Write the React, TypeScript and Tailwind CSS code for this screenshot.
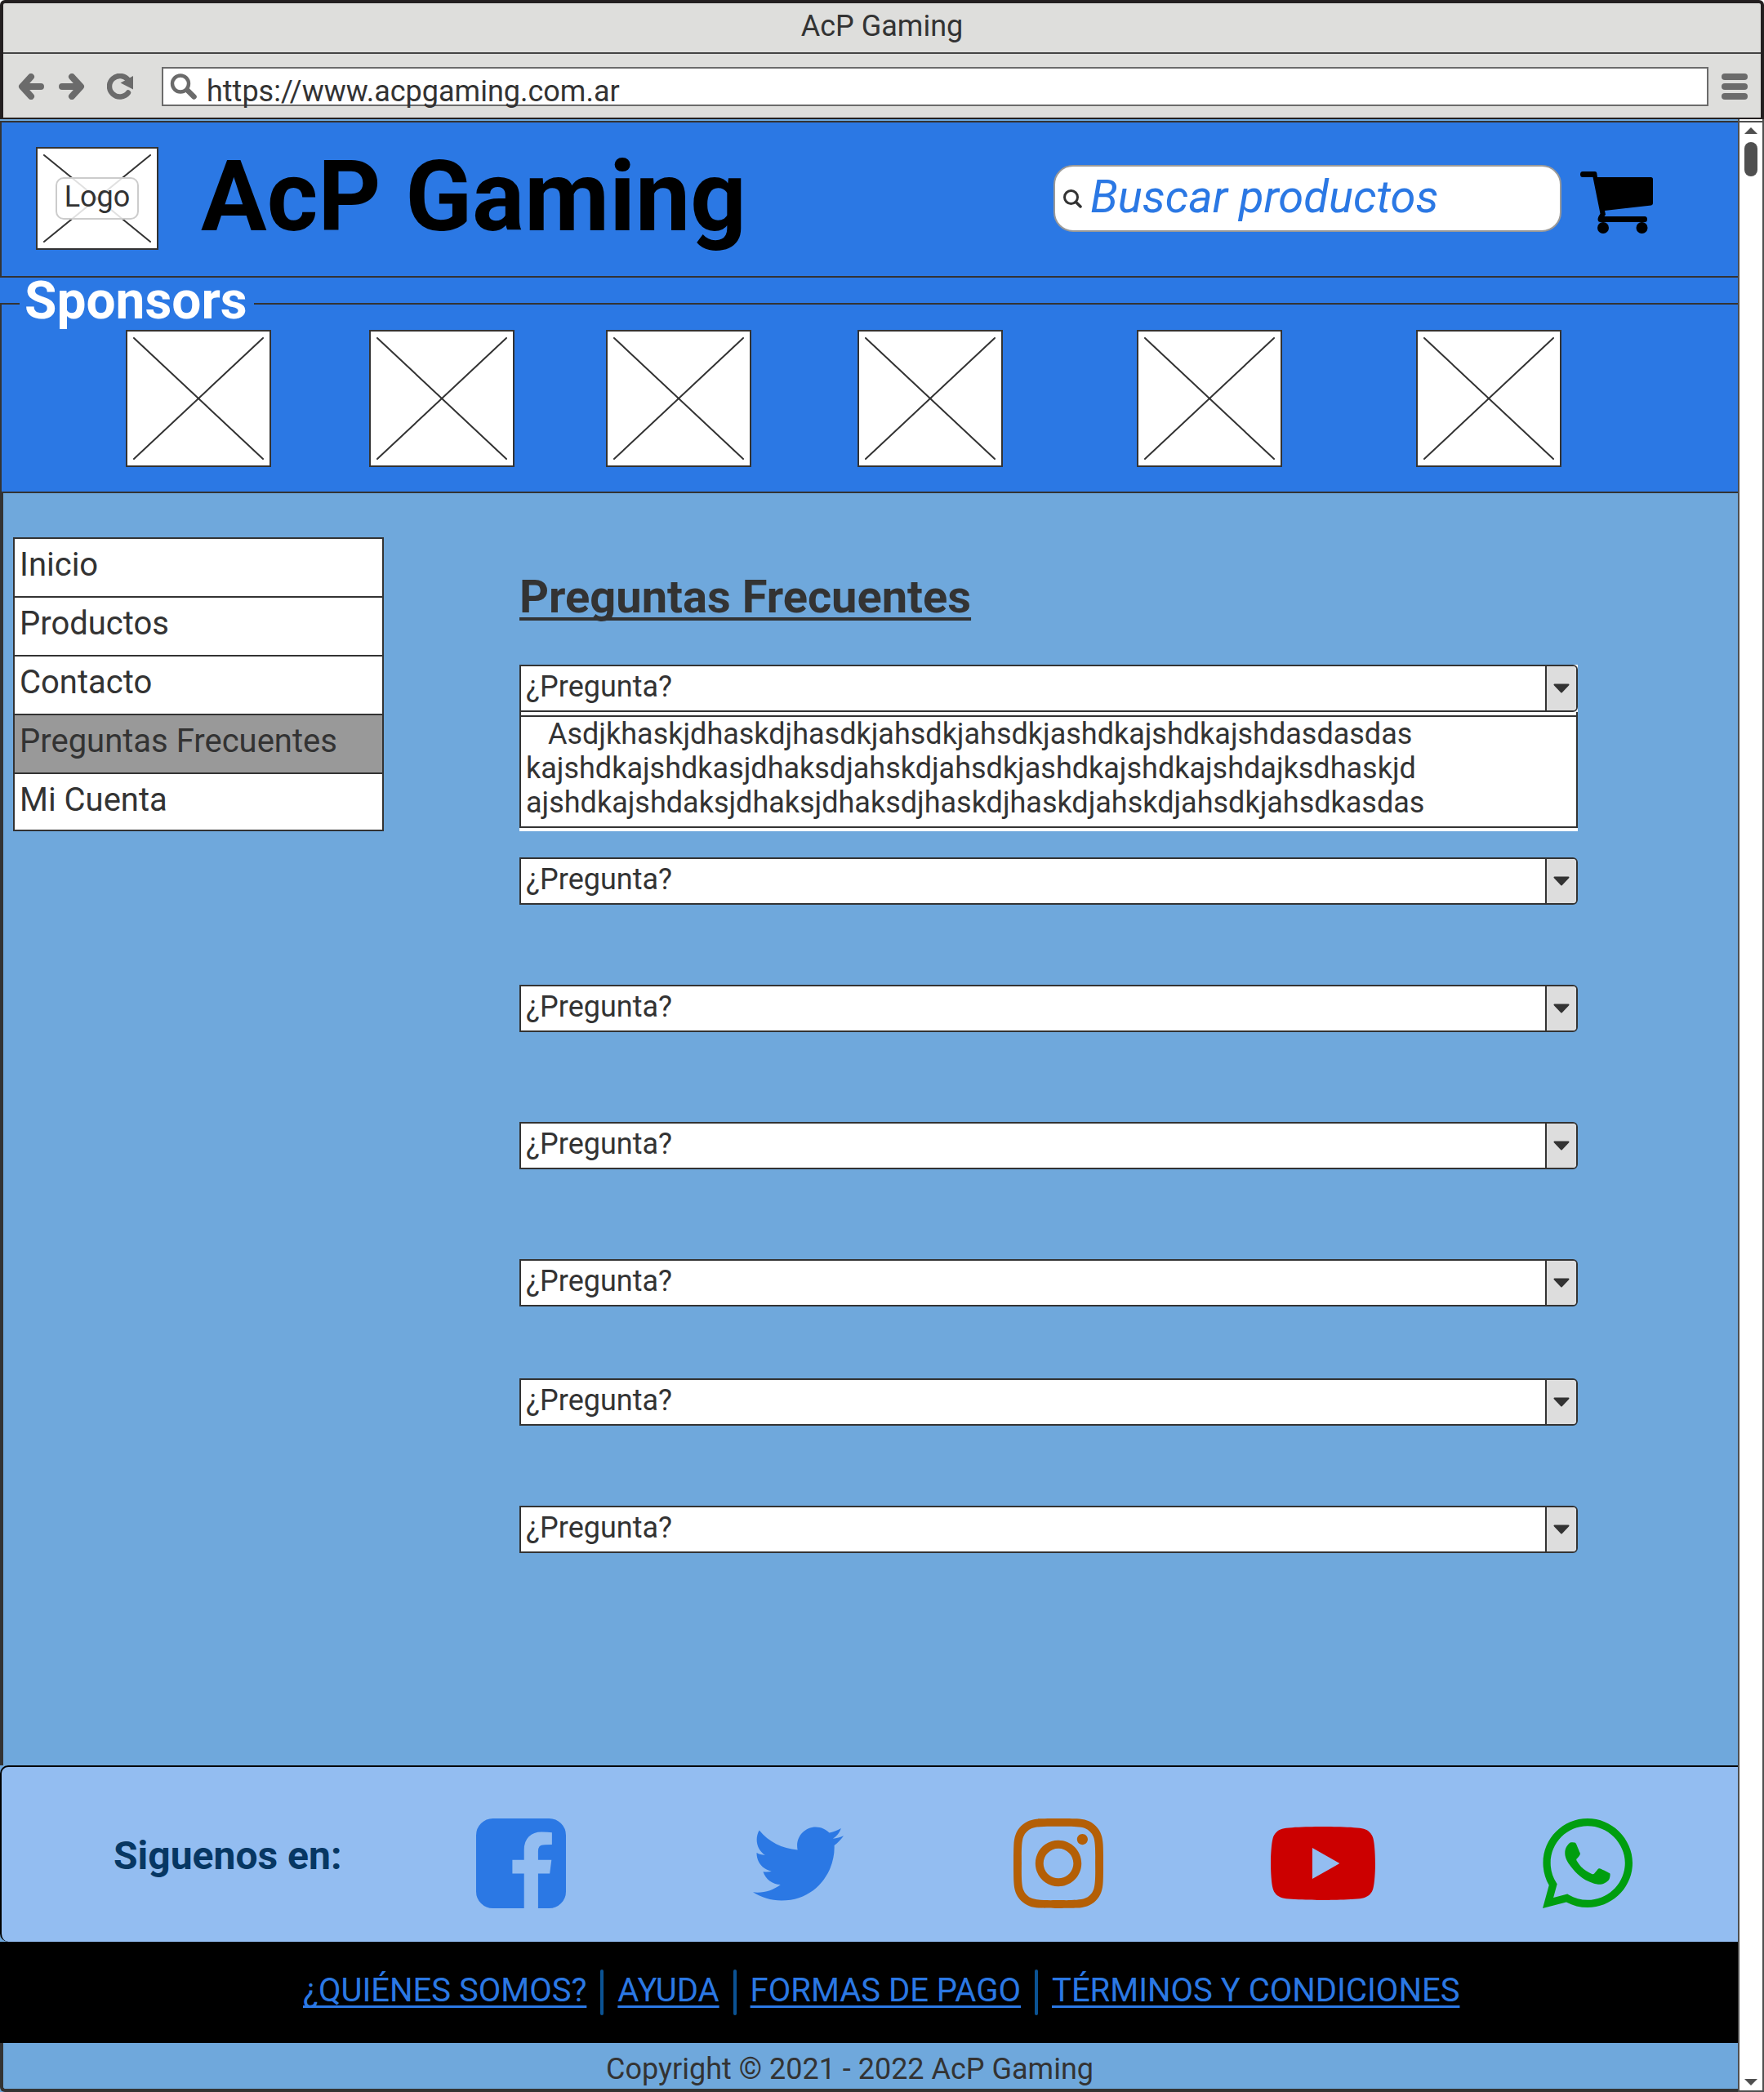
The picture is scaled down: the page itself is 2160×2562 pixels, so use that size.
import { FaInstagram, FaTwitter, FaWhatsapp, FaYoutube } from "react-icons/fa";

const sponsors = [
  { name: "Sponsor 1", gap: "ml-[130px]" },
  { name: "Sponsor 2", gap: "ml-[120px]" },
  { name: "Sponsor 3", gap: "ml-[112px]" },
  { name: "Sponsor 4", gap: "ml-[130px]" },
  { name: "Sponsor 5", gap: "ml-[164px]" },
  { name: "Sponsor 6", gap: "ml-[164px]" },
];

const menu = ["Inicio", "Productos", "Contacto", "Preguntas Frecuentes", "Mi Cuenta"];
const currentPage = "Preguntas Frecuentes";

const answer = [
  "Asdjkhaskjdhaskdjhasdkjahsdkjahsdkjashdkajshdkajshdasdasdas",
  "kajshdkajshdkasjdhaksdjahskdjahsdkjashdkajshdkajshdajksdhaskjd",
  "ajshdkajshdaksjdhaksjdhaksdjhaskdjhaskdjahskdjahsdkjahsdkasdas",
];

const closedQuestions = ["mt-8", "mt-[98px]", "mt-[110px]", "mt-[110px]", "mt-[88px]", "mt-[98px]"];

const footerLinks = ["¿QUIÉNES SOMOS?", "AYUDA", "FORMAS DE PAGO", "TÉRMINOS Y CONDICIONES"];

function Crossed() {
  return (
    <svg className="block h-full w-full overflow-visible" stroke="#333333" strokeWidth="2" strokeLinecap="round" aria-hidden="true">
      <line x1="0" y1="0" x2="100%" y2="100%" />
      <line x1="100%" y1="0" x2="0" y2="100%" />
    </svg>
  );
}

function BrowserBar() {
  return (
    <div className="rounded-t-[6px] border-x-4 border-t-4 border-b-2 border-[#231f20] bg-[#dededc]">
      <div className="h-[62px] border-b-2 border-[#444444] text-center text-4xl leading-[56px]">AcP Gaming</div>
      <div className="flex h-[78px] items-center pt-0.5 pr-4 pl-[18px]">
        <button type="button" aria-label="Atrás">
          <svg className="block h-8 w-8" viewBox="0 0 32 32" fill="none" stroke="#6b6b6b" strokeWidth="8" strokeLinecap="round" strokeLinejoin="round">
            <path d="M16 4 5 16l11 12M6 16h22" />
          </svg>
        </button>
        <button type="button" aria-label="Adelante" className="ml-[18px]">
          <svg className="block h-8 w-8" viewBox="0 0 32 32" fill="none" stroke="#6b6b6b" strokeWidth="8" strokeLinecap="round" strokeLinejoin="round">
            <path d="m16 4 11 12-11 12M26 16H4" />
          </svg>
        </button>
        <button type="button" aria-label="Recargar" className="ml-[27px]">
          <svg className="block h-8 w-8" viewBox="0 0 32 32">
            <path d="M26 23.500A12.800 12.800 0 1 1 26 8" fill="none" stroke="#6b6b6b" strokeWidth="6.400" strokeLinecap="round" />
            <path d="M32 3v16.500L16.500 11.500Z" fill="#6b6b6b" />
          </svg>
        </button>
        <div className="ml-[35px] flex h-12 min-w-0 flex-1 items-start border-2 border-[#6b6b6b] bg-white pl-2">
          <svg className="mt-1.5 block h-8 w-[33px] shrink-0" viewBox="0 0 33 32" fill="none" stroke="#6b6b6b" strokeLinecap="round" aria-hidden="true">
            <circle cx="13" cy="12.500" r="10" strokeWidth="4.400" />
            <path d="m22 21 7.500 7.500" strokeWidth="6.500" />
          </svg>
          <input
            type="text"
            aria-label="Dirección"
            defaultValue="https://www.acpgaming.com.ar"
            className="ml-3 h-14 min-w-0 flex-1 bg-transparent text-4xl outline-none"
          />
        </div>
        <button type="button" aria-label="Menú" className="ml-4 flex w-8 flex-col gap-1">
          <span className="h-2 rounded-full bg-[#6b6b6b]" />
          <span className="h-2 rounded-full bg-[#6b6b6b]" />
          <span className="h-2 rounded-full bg-[#6b6b6b]" />
        </button>
      </div>
    </div>
  );
}

function ScrollBar() {
  return (
    <div className="flex w-8 shrink-0 flex-col border-x-2 border-b-2 border-[#4f4f4f] bg-white" aria-hidden="true">
      <div className="h-1 border-b-2 border-[#4f4f4f]" />
      <svg className="mt-1.5 h-2 w-4 self-center" viewBox="0 0 16 8" fill="#4f4f4f">
        <path d="M8 0l8 8H0z" />
      </svg>
      <div className="mt-2.5 h-[42px] w-4 self-center rounded-full bg-[#4f4f4f]" />
      <svg className="mt-auto mb-1.5 h-2 w-4 self-center" viewBox="0 0 16 8" fill="#4f4f4f">
        <path d="M0 0h16L8 8z" />
      </svg>
    </div>
  );
}

function SiteHeader() {
  return (
    <header className="mt-0.5 flex h-48 items-center border-y-2 border-l-2 border-[#333333] bg-[#2b78e4] pr-[104px] pb-0.5 pl-[42px]">
      <a href="#" className="grid h-[126px] w-[150px] shrink-0 grid-cols-1 grid-rows-1 place-items-center border-2 border-[#333333] bg-white p-2">
        <span className="col-start-1 row-start-1 h-[106px] w-[130px]">
          <Crossed />
        </span>
        <span className="z-10 col-start-1 row-start-1 h-[52px] w-[102px] rounded-[10px] border-2 border-[#cccccc] bg-white/85 text-center text-4xl leading-[44px]">
          Logo
        </span>
      </a>
      <h1 className="ml-[52px] pb-1 text-[120px] leading-none font-bold whitespace-nowrap text-black">AcP Gaming</h1>
      <label className="ml-auto flex h-[82px] w-[622px] items-center rounded-3xl border-2 border-[#999999] bg-white pr-6 pl-2.5">
        <svg className="block h-[23px] w-[23px] shrink-0" viewBox="0 0 23 23" fill="none" stroke="#333333" strokeLinecap="round" aria-hidden="true">
          <circle cx="9.500" cy="9.500" r="8" strokeWidth="3" />
          <path d="m15.500 15.500 5.500 5.500" strokeWidth="3.500" />
        </svg>
        <input
          type="search"
          aria-label="Buscar productos"
          placeholder="Buscar productos"
          className="ml-2.5 min-w-0 flex-1 bg-transparent pb-1 text-[56px] leading-[66px] italic outline-none placeholder:text-[#2b78e4] placeholder:opacity-100"
        />
      </label>
      <button type="button" aria-label="Carrito" className="mt-2.5 ml-[23px] shrink-0">
        <svg className="block h-[76px] w-[89px]" viewBox="0 0 89 76">
          <path d="M3 0H18Q20 0 20.300 2L21 7H86.500Q89 7 89 9.500V39Q89 41 87 41.400L30 48 31 52.700 29.500 55H79Q82 55 82 58.500T79 62H25Q21.500 62 21.500 58.500 21.500 56 24.500 51.700L15.500 7H3Q0 7 0 3.500T3 0Z" />
          <circle cx="28" cy="69" r="7" />
          <circle cx="75.500" cy="69" r="7" />
        </svg>
      </button>
    </header>
  );
}

function Sponsors() {
  return (
    <section className="bg-[#2b78e4]">
      <fieldset className="min-w-0 border-y-2 border-l-2 border-[#333333] pb-[30px] pl-[22px]">
        <legend className="pr-2 pb-1.5 pl-1.5 text-[64px] leading-[58px] font-bold text-white">Sponsors</legend>
        <div className="flex">
          {sponsors.map((s) => (
            <div key={s.name} role="img" aria-label={s.name} className={`${s.gap} h-[168px] w-[178px] border-2 border-[#333333] bg-white p-2`}>
              <Crossed />
            </div>
          ))}
        </div>
      </fieldset>
    </section>
  );
}

function Question({ number }: { number: number }) {
  return (
    <div className="flex h-[58px] overflow-hidden rounded-r-[6px] border-2 border-[#333333] bg-white">
      <select aria-label={`Pregunta ${number}`} className="h-[50px] min-w-0 flex-1 appearance-none bg-transparent pl-1.5 text-4xl outline-none">
        <option>¿Pregunta?</option>
      </select>
      <span className="grid w-[38px] place-items-center border-l-2 border-[#333333] bg-[#dddddd]" aria-hidden="true">
        <svg className="h-3 w-5" viewBox="0 0 20 12" fill="#333333" stroke="#333333" strokeLinejoin="round" strokeWidth="2">
          <path d="M1.500 1.500h17L10 10.500z" />
        </svg>
      </span>
    </div>
  );
}

function Faq() {
  return (
    <section className="mr-[196px] ml-[166px] min-w-0 flex-1 pt-[94px] pb-[260px]">
      <h2 className="text-[56px] leading-[66px] font-bold underline decoration-4 underline-offset-[6px] [text-decoration-skip-ink:none]">
        Preguntas Frecuentes
      </h2>
      <div className="mt-[50px] bg-white pb-1">
        <Question number={1} />
        <div className="border-x-2 border-b-2 border-[#333333] pt-1">
          <p className="border-t-2 border-[#333333] pb-2 pl-1.5 indent-[27px] text-4xl leading-[42px]">
            {answer[0]}
            <br />
            {answer[1]}
            <br />
            {answer[2]}
          </p>
        </div>
      </div>
      {closedQuestions.map((gap, i) => (
        <div key={i} className={gap}>
          <Question number={i + 2} />
        </div>
      ))}
    </section>
  );
}

function Social() {
  return (
    <section className="flex h-[216px] items-start rounded-l-[10px] border-t-2 border-l-2 border-black bg-[#93bdf1] pl-[137px]">
      <h2 className="mt-[81px] text-5xl leading-[56px] font-bold whitespace-nowrap text-[#073763]">Siguenos en:</h2>
      <div className="mt-[63px] ml-[165px] flex h-[110px] items-center">
        <a href="#" aria-label="Facebook">
          <svg className="block h-[110px] w-[110px]" viewBox="0 128 1536 1536" fill="#2b78e4">
            <path d="M1248 128q119 0 203.500 84.500t84.500 203.500v960q0 119-84.500 203.500t-203.500 84.500h-188v-595h199l30-232h-229v-148q0-56 23.500-84t91.500-28l122-1v-207q-63-9-178-9-136 0-217.500 80t-81.500 226v171h-200v232h200v595h-532q-119 0-203.500-84.500t-84.500-203.500v-960q0-119 84.500-203.500t203.500-84.500h960z" />
          </svg>
        </a>
        <a href="#" aria-label="Twitter" className="ml-[229px]">
          <FaTwitter viewBox="0 48 512 416" className="block h-[91px] w-[111px] text-[#2b78e4]" />
        </a>
        <a href="#" aria-label="Instagram" className="ml-[208px]">
          <FaInstagram viewBox="0 32 448 448" className="block h-[110px] w-[110px] text-[#b45f06]" />
        </a>
        <a href="#" aria-label="YouTube" className="ml-[205px]">
          <FaYoutube viewBox="15 64 546 384" className="block h-[90px] w-[128px] text-[#cc0000]" />
        </a>
        <a href="#" aria-label="WhatsApp" className="ml-[205px]">
          <FaWhatsapp viewBox="0 32 448 448" className="block h-[110px] w-[110px] text-[#009e0f]" />
        </a>
      </div>
    </section>
  );
}

export default function App() {
  return (
    <div className="flex min-h-screen flex-col bg-white font-[Roboto,sans-serif] text-[#333333]">
      <BrowserBar />
      <div className="flex flex-1">
        <div className="flex min-w-0 flex-1 flex-col bg-[#6fa8dc]">
          <SiteHeader />
          <Sponsors />
          <main className="flex flex-1 items-start border-l-4 border-[#333333] pl-3">
            <nav className="mt-[54px] w-[454px] shrink-0 divide-y-2 divide-[#333333] border-2 border-[#333333] bg-white">
              {menu.map((item) => (
                <a
                  key={item}
                  href="#"
                  aria-current={item === currentPage ? "page" : undefined}
                  className={`block h-[72px] pl-1.5 text-[40px] leading-[64px] last:h-[68px] ${item === currentPage ? "bg-[#999999]" : ""}`}
                >
                  {item}
                </a>
              ))}
            </nav>
            <Faq />
          </main>
          <footer>
            <Social />
            <div className="flex h-[124px] items-center gap-[17px] bg-black pl-[371px]">
              {footerLinks.map((text, i) => (
                <div key={text} className="flex items-center gap-[17px]">
                  {i > 0 && <span className="h-14 w-1 rounded-full bg-[#0b5394]" />}
                  <a
                    href="#"
                    className="pb-1 text-[40px] leading-[46px] whitespace-nowrap text-[#2b78e4] underline decoration-3 underline-offset-[5px] [text-decoration-skip-ink:none]"
                  >
                    {text}
                  </a>
                </div>
              ))}
            </div>
            <p className="h-[60px] rounded-bl-[6px] border-b-4 border-l-4 border-[#333333] pt-[11px] pl-[738px] text-4xl leading-[42px]">
              Copyright © 2021 - 2022 AcP Gaming
            </p>
          </footer>
        </div>
        <ScrollBar />
      </div>
    </div>
  );
}
